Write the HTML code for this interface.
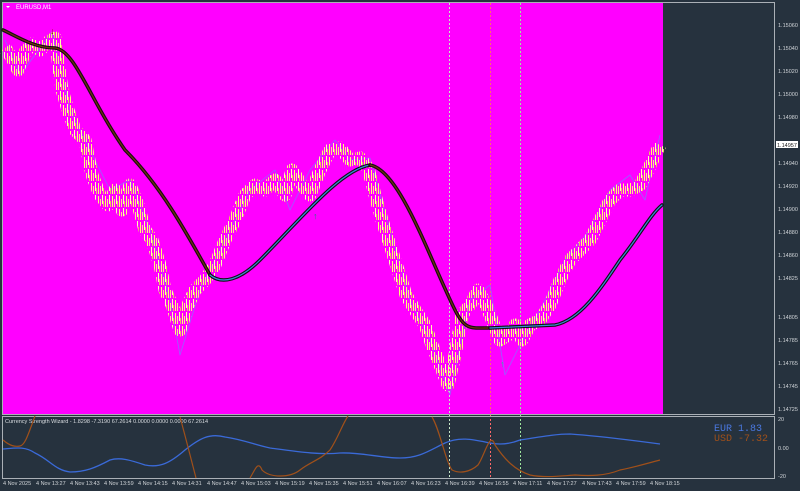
<!DOCTYPE html>
<html><head><meta charset="utf-8"><style>
html,body{margin:0;padding:0;background:#26323e;width:800px;height:491px;overflow:hidden;font-family:"Liberation Sans",sans-serif}
svg{display:block}
text{font-family:"Liberation Sans",sans-serif}
</style></head><body>
<svg width="800" height="491" viewBox="0 0 800 491" xmlns="http://www.w3.org/2000/svg">
<defs>
<pattern id="st" x="0" y="0" width="7" height="13" patternUnits="userSpaceOnUse">
<rect x="0" y="1" width="1" height="11" fill="#ffff70"/>
<rect x="2" y="4" width="1" height="8" fill="#ffe08a"/>
<rect x="4" y="0" width="1" height="9" fill="#ffffb0"/>
<rect x="5" y="6" width="1" height="6" fill="#e8c060"/>
</pattern>
</defs>
<rect x="0" y="0" width="800" height="491" fill="#26323e"/>
<rect x="3" y="3" width="660" height="411" fill="#ff00ff"/>
<rect x="2.5" y="2.5" width="772" height="412" fill="none" stroke="#aab0b6" stroke-width="1"/>
<text x="16" y="9" font-size="6" fill="#fff">EURUSD,M1</text>
<path d="M6 6 L10 6 L8 8Z" fill="#fff"/>
<line x1="449.5" y1="3" x2="449.5" y2="478" stroke="#c8e8c8" stroke-dasharray="2 2" stroke-width="1"/>
<line x1="490.5" y1="3" x2="490.5" y2="478" stroke="#ff6a6a" stroke-dasharray="2 2" stroke-width="1"/>
<line x1="520.5" y1="3" x2="520.5" y2="478" stroke="#9ee89e" stroke-dasharray="2 2" stroke-width="1"/>
<g fill="none" stroke-linejoin="round">
<polyline stroke="#7a7aff" stroke-width="0.8" opacity="0.8" points="5,40 20,75 35,55 52,32 70,110 90,150 110,190 130,180 150,230 170,300 180,355 200,290 230,230 250,190 275,170 290,210 310,170 335,140 350,160 370,158 390,230 410,300 430,340 450,395 470,300 490,285 505,375 520,345 540,310 565,260 590,230 610,190 630,175 645,200 660,135"/>
<polyline stroke="url(#st)" stroke-width="13" points="5,48 12,58 18,70 25,52 32,44 40,50 48,42 55,38 58,60 62,90 68,110 75,130 85,140 92,175 100,195 108,205 115,190 122,210 130,185 138,205 145,230 152,240 160,265 165,290 172,305 180,330 188,305 195,290 205,280 215,265 225,240 235,220 245,195 255,185 265,190 275,180 285,195 292,170 302,185 310,195 320,170 330,150 340,148 350,160 360,158 368,168 375,195 382,220 390,245 398,270 406,295 415,310 425,325 432,345 440,365 448,385 455,355 462,315 470,305 478,290 486,305 494,325 500,340 508,335 515,325 522,340 530,325 540,320 550,305 560,280 570,260 580,250 590,240 600,220 610,200 620,190 630,190 640,185 648,170 655,155 660,145"/>
</g>
<g fill="none" stroke-linecap="round" stroke-linejoin="round">
<path d="M3,30 C20,38 35,48 55,48 C75,50 90,100 125,150 C160,185 185,230 210,275" stroke="#111" stroke-width="3.5"/>
<path d="M3,30 C20,38 35,48 55,48 C75,50 90,100 125,150 C160,185 185,230 210,275" stroke="#7a2a10" stroke-width="1.2"/>
<path d="M210,275 C222,285 240,280 260,260 C300,220 340,170 370,165" stroke="#111" stroke-width="3.5"/>
<path d="M210,275 C222,285 240,280 260,260 C300,220 340,170 370,165" stroke="#3a8ad8" stroke-width="1.2"/>
<path d="M370,165 C400,170 430,260 455,310 C465,330 470,328 490,328" stroke="#111" stroke-width="3.5"/>
<path d="M370,165 C400,170 430,260 455,310 C465,330 470,328 490,328" stroke="#7a2a10" stroke-width="1.2"/>
<path d="M490,328 L555,325 C580,320 600,290 620,260 C640,235 650,215 662,205" stroke="#111" stroke-width="3.5"/>
<path d="M490,328 L555,325 C580,320 600,290 620,260 C640,235 650,215 662,205" stroke="#3a8ad8" stroke-width="1.2"/>
</g>
<text x="50" y="34" font-size="9" fill="#a00000">↓</text>
<text x="313" y="219" font-size="9" fill="#208080">↑</text>
<text x="500" y="367" font-size="9" fill="#40a0a0">↑</text>
<g font-size="5.5" fill="#d0d4d8">
<text x="778" y="27">1.15060</text><text x="778" y="50">1.15040</text><text x="778" y="73">1.15020</text>
<text x="778" y="96">1.15000</text><text x="778" y="119">1.14980</text>
<text x="778" y="165">1.14940</text><text x="778" y="188">1.14920</text><text x="778" y="211">1.14900</text>
<text x="778" y="234">1.14880</text><text x="778" y="257">1.14860</text><text x="778" y="280">1.14825</text>
<text x="778" y="319">1.14805</text><text x="778" y="342">1.14785</text><text x="778" y="365">1.14765</text>
<text x="778" y="388">1.14745</text><text x="778" y="411">1.14725</text>
</g>
<rect x="776" y="141" width="22" height="7" fill="#fff"/>
<text x="777" y="147" font-size="5.5" fill="#222">1.14957</text>
<rect x="2.5" y="416.5" width="772" height="62" fill="none" stroke="#aab0b6" stroke-width="1"/>
<text x="5" y="423" font-size="5.5" fill="#d8dce0">Currency Strength Wizard -  1.8298 -7.3190 67.2614 0.0000 0.0000 0.0000 67.2614</text>
<path d="M3,449 C15,448 25,446 35,453 C50,460 55,470 70,472 C85,472 95,468 110,460 C120,457 130,460 145,465 C160,468 170,463 185,450 C200,438 210,433 225,437 C245,440 255,445 270,448 C300,452 320,455 340,453 C360,452 380,458 400,458 C420,458 430,450 445,443 C460,436 475,440 490,443 C500,445 510,444 520,440 C540,437 555,434 570,434 C600,436 630,440 660,444" fill="none" stroke="#3a6ad8" stroke-width="1.3"/>
<path d="M3,440 C10,446 15,447 20,446 C25,445 28,435 35,416 M180,417 C185,435 190,455 196,478 M250,478 C255,470 258,460 262,470 C270,478 290,478 300,470 C310,462 320,460 330,450 C338,438 342,425 348,416 M432,417 C440,430 445,460 452,470 C460,474 470,472 478,465 C485,455 490,430 495,445 C505,460 515,470 530,475 C545,478 560,476 575,475 C590,476 605,476 620,470 C635,467 645,464 660,460" fill="none" stroke="#a0501a" stroke-width="1.2"/>
<text x="714" y="431" font-size="10" fill="#4a78e0" style="font-family:'Liberation Mono',monospace">EUR  1.83</text>
<text x="714" y="441" font-size="10" fill="#a0501a" style="font-family:'Liberation Mono',monospace">USD -7.32</text>
<g font-size="5.5" fill="#d0d4d8">
<text x="778" y="421">20</text><text x="778" y="450">0.00</text><text x="778" y="478">-20</text>
</g>
<g font-size="5.5" fill="#d0d4d8">
<text x="3" y="485">4 Nov 2025</text><text x="36" y="485">4 Nov 13:27</text><text x="70" y="485">4 Nov 13:43</text>
<text x="104" y="485">4 Nov 13:59</text><text x="138" y="485">4 Nov 14:15</text><text x="172" y="485">4 Nov 14:31</text>
<text x="207" y="485">4 Nov 14:47</text><text x="241" y="485">4 Nov 15:03</text><text x="275" y="485">4 Nov 15:19</text>
<text x="309" y="485">4 Nov 15:35</text><text x="343" y="485">4 Nov 15:51</text><text x="377" y="485">4 Nov 16:07</text>
<text x="411" y="485">4 Nov 16:23</text><text x="445" y="485">4 Nov 16:39</text><text x="479" y="485">4 Nov 16:55</text>
<text x="513" y="485">4 Nov 17:11</text><text x="547" y="485">4 Nov 17:27</text><text x="582" y="485">4 Nov 17:43</text>
<text x="616" y="485">4 Nov 17:59</text><text x="650" y="485">4 Nov 18:15</text>
</g>
</svg>
</body></html>
